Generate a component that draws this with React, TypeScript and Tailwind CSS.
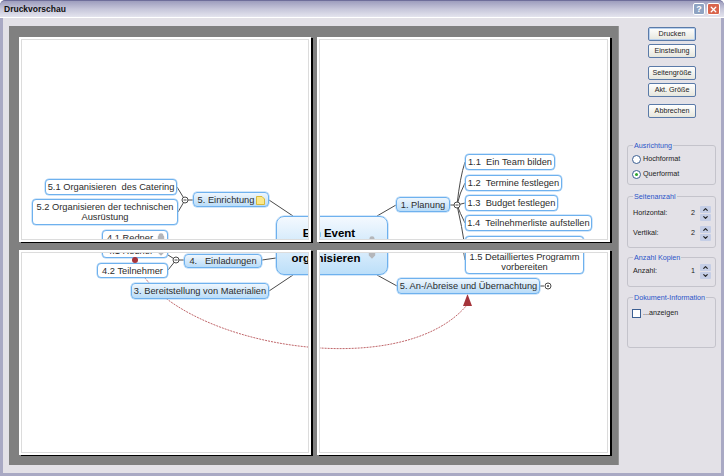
import React from "react";
import { ChevronDown, ChevronUp, X } from "lucide-react";

const font = "font-['Liberation_Sans',Arial,sans-serif]";

const GrayMark = ({ className }: { className: string }) => (
  <svg viewBox="0 0 10 12" className={`absolute ${className}`}>
    <path d="M5 0C7 0 8 1 8 3L9 4V8L5 12L1 8V4L2 3C2 1 3 0 5 0Z" fill="#b4b6ba" />
  </svg>
);

// one mind map, drawn once per sheet and cut off by the sheet's edge
const MindMap = () => (
  <div className={`relative w-[724px] h-[476px] text-[#2c2c2c] text-[9.300px] leading-[10px] ${font}`}>
    <svg viewBox="0 0 724 476" className="absolute inset-0 w-[724px] h-[476px]" fill="none">
      <g stroke="#4a4a4a" strokeWidth="1">
        <path d="M177 200L185 213L178 225M185 213H193M269 213L293 229" />
        <path d="M168 255L176 260L168 270M176 260H184M262 260L276 258M269 291L293 275" />
        <path d="M377 229L396 218M450 218H457M457 218Q460 190 465 175M457 218Q460 205 465 196M457 218L465 216M457 218Q460 226 465 236M457 218Q462 240 465 260" />
        <path d="M377 275L397 286M540 286H544" />
      </g>
      <path d="M137 265C175 345 400 385 467 305" stroke="#c0666a" strokeWidth="1" strokeDasharray="2 1" />
      <path d="M467.500 294L472 306H463Z" fill="#a5333a" />
      <g fill="#fff" stroke="#4a4a4a">
        <circle cx="185" cy="213" r="3" />
        <circle cx="176" cy="260" r="3" />
        <circle cx="457" cy="218" r="3" />
        <circle cx="548" cy="286" r="3" />
      </g>
      <path d="M183.500 213H186.500M174.500 260H177.500M455.500 218H458.500" stroke="#4a4a4a" />
      <circle cx="548" cy="286" r="1" fill="#4a4a4a" />
    </svg>

    <Leaf className="left-[45px] top-[192px] w-[132px] h-[16px]">5.1 Organisieren  des Catering</Leaf>
    <Leaf className="left-[32px] top-[212px] w-[146px] h-[26px]">5.2 Organisieren der technischen{"\n"}Ausrüstung</Leaf>
    <Leaf className="left-[102px] top-[243px] w-[66px] h-[15px]">
      <span className="pr-[10px]">4.1 Redner</span>
      <GrayMark className="left-[54px] top-[2px] w-[8px] h-[10px]" />
    </Leaf>
    <Leaf className="left-[97px] top-[263px] w-[71px] h-[15px]">4.2 Teilnehmer</Leaf>
    <span className="absolute left-[132px] top-[257px] w-[6px] h-[6px] rounded-full bg-[#a5333a]" />

    <Topic className="left-[193px] top-[205px] w-[76px] h-[15px]">
      <span className="pr-[10px]">5. Einrichtung</span>
      <svg viewBox="0 0 9 9" className="absolute left-[62px] top-[3px] w-[9px] h-[9px]">
        <path d="M.5.5H6L8.500 3V8.500H.5Z" fill="#fbe88a" stroke="#d8b93a" />
      </svg>
    </Topic>
    <Topic className="left-[184px] top-[254px] w-[78px] h-[14px]">4.   Einladungen</Topic>
    <Topic className="left-[131px] top-[283px] w-[138px] h-[16px]">3. Bereitstellung von Materialien</Topic>

    <div className="absolute left-[276px] top-[229px] w-[112px] h-[46px] flex flex-col items-center justify-center pr-[12px] rounded-[8px] border border-[#6eb1ee] shadow-[0_0_0_0.5px_#a8d0f5] bg-gradient-to-b from-[#f4f9fe] to-[#bcdff9] text-black font-bold text-[11.500px] leading-[12px] text-center whitespace-pre">
      <span className="pl-[6px]">Ein Event</span>
      <span>organisieren</span>
      <GrayMark className="left-[91px] top-[19px] w-[8px] h-[10px]" />
    </div>

    <Topic className="left-[396px] top-[210px] w-[54px] h-[15px]">1. Planung</Topic>
    <Leaf className="left-[465px] top-[167px] w-[90px] h-[16px]">1.1  Ein Team bilden</Leaf>
    <Leaf className="left-[465px] top-[188px] w-[97px] h-[16px]">1.2  Termine festlegen</Leaf>
    <Leaf className="left-[465px] top-[208px] w-[93px] h-[16px]">1.3  Budget festlegen</Leaf>
    <Leaf className="left-[465px] top-[228px] w-[127px] h-[16px]">1.4  Teilnehmerliste aufstellen</Leaf>
    <Leaf className="left-[465px] top-[249px] w-[119px] h-[25px]">1.5 Detailliertes Programm{"\n"}vorbereiten</Leaf>
    <Topic className="left-[397px] top-[278px] w-[143px] h-[16px]">5. An-/Abreise und Übernachtung</Topic>
  </div>
);

const Leaf = ({ className, children }: { className: string; children: React.ReactNode }) => (
  <div className={`absolute flex items-center justify-center text-center whitespace-pre rounded-[4px] border border-[#6eb1ee] shadow-[0_0_0_0.5px_#a8d0f5] bg-white ${className}`}>
    <div>{children}</div>
  </div>
);

const Topic = ({ className, children }: { className: string; children: React.ReactNode }) => (
  <div className={`absolute flex items-center justify-center whitespace-pre rounded-[4px] border border-[#6eb1ee] shadow-[0_0_0_0.5px_#a8d0f5] bg-gradient-to-b from-[#eef6fd] to-[#b9dcf8] ${className}`}>
    {children}
  </div>
);

const Sheet = ({ mapClass }: { mapClass: string }) => (
  <div className="bg-white p-[2px] shadow-[2px_1px_0_#000]">
    <div className="relative h-full overflow-hidden border border-[#dcdcdc]">
      <div className={`absolute ${mapClass}`}>
        <MindMap />
      </div>
    </div>
  </div>
);

const Btn = ({ label, className = "" }: { label: string; className?: string }) => (
  <button className={`w-[48px] h-[14px] rounded-[2px] border border-[#5a7aa8] bg-gradient-to-b from-white to-[#e6e6dd] text-[7.200px] leading-[12px] text-[#222] ${className}`}>
    {label}
  </button>
);

const Group = ({ title, className, children }: { title: string; className: string; children?: React.ReactNode }) => (
  <fieldset className={`ml-[9px] w-[89px] min-w-0 rounded-[3px] border border-[#c4c3cb] px-[4px] ${className}`}>
    <legend className="ml-[1px] px-[1px] text-[7.200px] leading-[9px] text-[#2a55c8] whitespace-nowrap">{title}</legend>
    {children}
  </fieldset>
);

const Spinner = () => (
  <div className="flex flex-col w-[11px] h-[15px] gap-px">
    <div className="flex-1 flex items-center justify-center rounded-[1px] bg-[#c5cee6]">
      <ChevronUp className="w-[7px] h-[7px] text-[#222]" strokeWidth={4} />
    </div>
    <div className="flex-1 flex items-center justify-center rounded-[1px] bg-[#c5cee6]">
      <ChevronDown className="w-[7px] h-[7px] text-[#222]" strokeWidth={4} />
    </div>
  </div>
);

const SpinRow = ({ label, value, className = "" }: { label: string; value: number; className?: string }) => (
  <div className={`flex items-center justify-between text-[7.200px] text-[#222] ${className}`}>
    <span className="pl-[1px]">{label}</span>
    <div className="flex items-center gap-[5px]">
      <span>{value}</span>
      <Spinner />
    </div>
  </div>
);

const Radio = ({ label, checked = false, className = "" }: { label: string; checked?: boolean; className?: string }) => (
  <div className={`flex items-center gap-[2px] text-[7.200px] text-[#222] ${className}`}>
    <span className="flex items-center justify-center w-[9px] h-[9px] rounded-full border border-[#3c5f92] bg-white">
      {checked && <span className="w-[3px] h-[3px] rounded-full bg-[#2fa52f]" />}
    </span>
    {label}
  </div>
);

export default function App() {
  return (
    <div className={`w-[724px] h-[476px] overflow-hidden flex flex-col rounded-t-[5px] bg-[#a9a9c4] px-[3px] pb-[3px] ${font}`}>
      <div className="h-[18px] -mx-[3px] flex items-center justify-between rounded-t-[5px] border-t border-[#6e6e9a] border-b border-b-white bg-gradient-to-b from-[#9d9dbd] via-[#c6c6da] to-[#e4e4ee] pl-[4px] pr-[4px]">
        <span className="text-[8.500px] font-bold text-[#111]">Druckvorschau</span>
        <div className="flex gap-[2px]">
          <div className="w-[12px] h-[12px] rounded-[2px] border border-white bg-[#8fa3c2] text-white text-[9px] leading-[10px] font-bold text-center">?</div>
          <div className="w-[13px] h-[12px] rounded-[2px] border border-white bg-[#d9644c] flex items-center justify-center">
            <X className="w-[9px] h-[9px] text-white" strokeWidth={3.5} />
          </div>
        </div>
      </div>

      <div className="flex-1 flex bg-[#e3e1e7] pt-[8px] pl-[6px] pb-[8px]">
        <div className="w-[609px] bg-[#808080] pt-[11px] pl-[10px] pr-[7px] pb-[10px] shadow-[1px_0_0_#999]">
          <div className="h-full grid grid-cols-[292px_293px] grid-rows-2 gap-x-[6px] gap-y-[8px]">
            <Sheet mapClass="left-[-22px] top-[-53px]" />
            <Sheet mapClass="left-[-320px] top-[-53px]" />
            <Sheet mapClass="left-[-22px] top-[-253px]" />
            <Sheet mapClass="left-[-320px] top-[-253px]" />
          </div>
        </div>

        <div className="flex-1 flex flex-col">
          <div className="flex flex-col items-start pl-[30px] pt-[1px]">
            <Btn label="Drucken" className="border-[#2f5e9e] shadow-[inset_0_0_0_1px_#b8d0ee]" />
            <Btn label="Einstellung" className="mt-[3px]" />
            <Btn label="Seitengröße" className="mt-[8px]" />
            <Btn label="Akt. Größe" className="mt-[3px]" />
            <Btn label="Abbrechen" className="mt-[7px]" />
          </div>

          <Group title="Ausrichtung" className="mt-[23px] h-[44px]">
            <Radio label="Hochformat" className="mt-[4px]" />
            <Radio label="Querformat" checked className="mt-[4px]" />
          </Group>
          <Group title="Seitenanzahl" className="mt-[7px] h-[56px]">
            <SpinRow label="Horizontal:" value={2} className="mt-[5px]" />
            <SpinRow label="Vertikal:" value={2} className="mt-[5px]" />
          </Group>
          <Group title="Anzahl Kopien" className="mt-[5px] h-[34px]">
            <SpinRow label="Anzahl:" value={1} className="mt-[2px]" />
          </Group>
          <Group title="Dokument-Information" className="mt-[6px] h-[55px]">
            <div className="flex items-center gap-[2px] mt-[6px] text-[7.200px] text-[#222]">
              <span className="w-[9px] h-[9px] border border-[#3c5f92] bg-white" />
              ...anzeigen
            </div>
          </Group>
        </div>
      </div>
    </div>
  );
}
